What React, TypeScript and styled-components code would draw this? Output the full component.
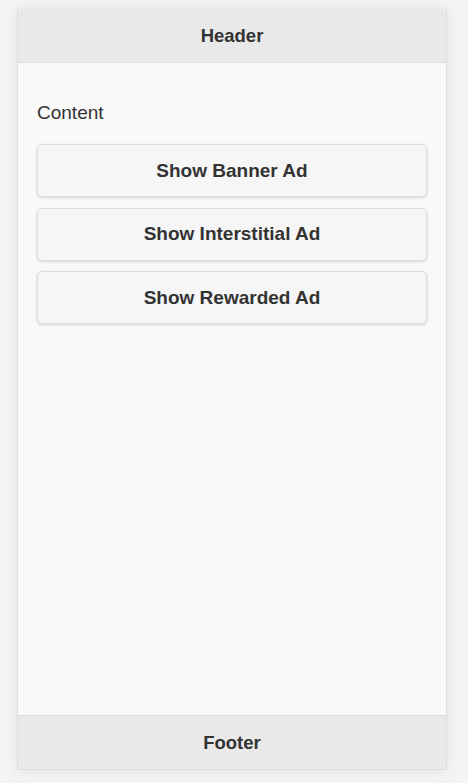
import React from 'react'
import styled, { createGlobalStyle } from 'styled-components'

const GlobalStyle = createGlobalStyle`
  html, body {
    margin: 0;
    padding: 0;
    background: #f4f4f4;
    font-family: "Liberation Sans", Arial, sans-serif;
    color: #333;
  }
`

const Page = styled.div`
  padding: 9px 21px 13px 17px;
  box-sizing: border-box;
  height: 783px;
  display: flex;
`

const Frame = styled.div`
  flex: 1;
  display: flex;
  flex-direction: column;
  background: #f9f9f9;
  border: 1px solid #dddddd;
  border-top: none;
  box-shadow: 0 0 12px rgba(0, 0, 0, 0.08);
`

const Bar = styled.div<{ $top?: boolean }>`
  height: 53px;
  display: flex;
  align-items: center;
  justify-content: center;
  background: #e9e9e9;
  font-size: 18.5px;
  font-weight: bold;
  color: #333;
  ${({ $top }) => ($top ? 'border-bottom: 1px solid #dddddd;' : 'border-top: 1px solid #dddddd;')}
`

const Content = styled.div`
  flex: 1;
  padding: 38px 19px 16px 19px;
  display: flex;
  flex-direction: column;
`

const Label = styled.p`
  margin: 0 0 19px 0;
  font-size: 19px;
  line-height: 24px;
  color: #333;
`

const ButtonList = styled.div`
  display: flex;
  flex-direction: column;
  gap: 10.5px;
`

const AdButton = styled.button`
  height: 53px;
  width: 100%;
  background: #f6f6f6;
  border: 1px solid #dddddd;
  border-radius: 5px;
  box-shadow: 0 1px 3px rgba(0, 0, 0, 0.15);
  font-family: "Liberation Sans", Arial, sans-serif;
  font-size: 19px;
  font-weight: bold;
  color: #333;
  cursor: pointer;
`

export default function App() {
  const buttons = ['Show Banner Ad', 'Show Interstitial Ad', 'Show Rewarded Ad']
  return (
    <>
      <GlobalStyle />
      <Page>
        <Frame>
          <Bar $top>Header</Bar>
          <Content>
            <Label>Content</Label>
            <ButtonList>
              {buttons.map((b) => (
                <AdButton key={b}>{b}</AdButton>
              ))}
            </ButtonList>
          </Content>
          <Bar>Footer</Bar>
        </Frame>
      </Page>
    </>
  )
}
